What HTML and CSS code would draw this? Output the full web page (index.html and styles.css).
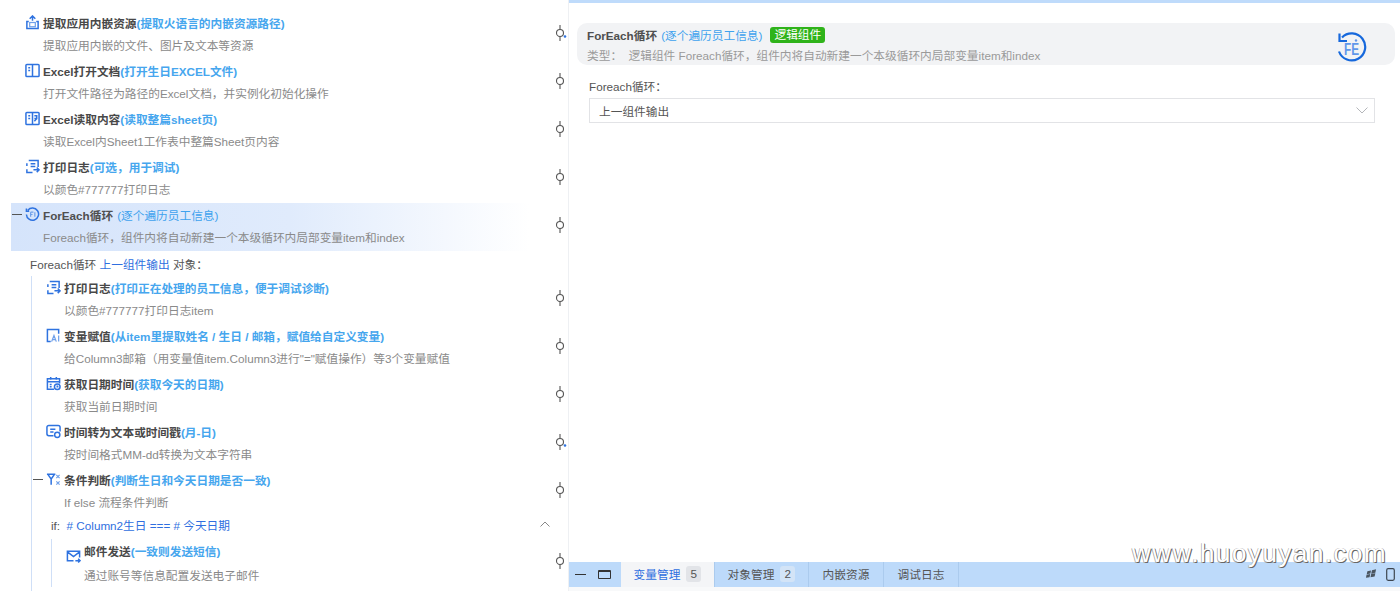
FILE: index.html
```html
<!DOCTYPE html>
<html lang="zh">
<head>
<meta charset="utf-8">
<title>ForEach循环</title>
<link rel="stylesheet" href="styles.css">
</head>
<body>
<div class="app">
  <section class="tree">
    <div class="node">
      <div class="title"><svg class="ico" viewBox="0 0 16 16"><path d="M5 4l3-3 3 3M8 1v5M4 7h-2v7.500h12V7h-2"/><rect class="soft" x="5" y="8" width="6" height="4.500"/></svg><b>提取应用内嵌资源</b><em>(提取火语言的内嵌资源路径)</em></div>
      <div class="desc">提取应用内嵌的文件、图片及文本等资源</div>
      <svg class="link" viewBox="0 0 12 18"><path d="M5 1v4.500M5 12.500V17"/><circle cx="5" cy="9" r="3.500"/><circle class="dot" cx="10" cy="12.500" r="1.300"/></svg>
    </div>
    <div class="node">
      <div class="title"><svg class="ico" viewBox="0 0 16 16"><rect x="1" y="1.500" width="14" height="13" rx="1"/><path d="M8 1.500v13M3.500 5h2M3.500 8h2"/></svg><b>Excel打开文档</b><em>(打开生日EXCEL文件)</em></div>
      <div class="desc">打开文件路径为路径的Excel文档，并实例化初始化操作</div>
      <svg class="link" viewBox="0 0 12 18"><path d="M5 1v4.500M5 12.500V17"/><circle cx="5" cy="9" r="3.500"/></svg>
    </div>
    <div class="node">
      <div class="title"><svg class="ico" viewBox="0 0 16 16"><rect x="1" y="1.500" width="14" height="13" rx="1"/><path d="M8 1.500v13M3.500 5h2M3.500 8h2M10 5h2.500v3H10M10 11l2.500-3"/></svg><b>Excel读取内容</b><em>(读取整篇sheet页)</em></div>
      <div class="desc">读取Excel内Sheet1工作表中整篇Sheet页内容</div>
      <svg class="link" viewBox="0 0 12 18"><path d="M5 1v4.500M5 12.500V17"/><circle cx="5" cy="9" r="3.500"/></svg>
    </div>
    <div class="node">
      <div class="title"><svg class="ico" viewBox="0 0 16 16"><path d="M4 1.500h10v7M2 7.500v-3M2 11v3.500h6M6 5h5M6 8h5M9 11.500h6M12.500 9l2.500 2.500-2.500 2.500"/></svg><b>打印日志</b><em>(可选，用于调试)</em></div>
      <div class="desc">以颜色#777777打印日志</div>
      <svg class="link" viewBox="0 0 12 18"><path d="M5 1v4.500M5 12.500V17"/><circle cx="5" cy="9" r="3.500"/></svg>
    </div>
    <div class="node node-active">
      <span class="toggle"></span>
      <div class="title"><svg class="ico" viewBox="0 0 16 16"><path d="M3 3.500A6.500 6.500 0 1 1 1.500 8M1.500 1.500v3h3"/><path class="soft" d="M6 5.500h3M6 5.500v5M6 8h2M10.500 5.500v5"/></svg><b class="thin">ForEach循环</b><em class="spaced">(逐个遍历员工信息)</em></div>
      <div class="desc">Foreach循环，组件内将自动新建一个本级循环内局部变量item和index</div>
      <svg class="link" viewBox="0 0 12 18"><path d="M5 1v4.500M5 12.500V17"/><circle cx="5" cy="9" r="3.500"/></svg>
    </div>
    <div class="loop-line">Foreach循环 <a>上一组件输出</a> 对象：</div>
    <div class="group group-outer">
      <div class="node">
        <div class="title"><svg class="ico" viewBox="0 0 16 16"><path d="M4 1.500h10v7M2 7.500v-3M2 11v3.500h6M6 5h5M6 8h5M9 11.500h6M12.500 9l2.500 2.500-2.500 2.500"/></svg><b>打印日志</b><em>(打印正在处理的员工信息，便于调试诊断)</em></div>
        <div class="desc">以颜色#777777打印日志item</div>
        <svg class="link" viewBox="0 0 12 18"><path d="M5 1v4.500M5 12.500V17"/><circle cx="5" cy="9" r="3.500"/></svg>
      </div>
      <div class="node">
        <div class="title"><svg class="ico" viewBox="0 0 16 16"><path d="M5 14.500H1.500v-13h12V6"/><path class="soft" d="M6 14.500l2.500-6.500 2.500 6.500M7 12.500h3M13.500 8v6.500"/></svg><b>变量赋值</b><em>(从item里提取姓名 / 生日 / 邮箱，赋值给自定义变量)</em></div>
        <div class="desc">给Column3邮箱（用变量值item.Column3进行"="赋值操作）等3个变量赋值</div>
        <svg class="link" viewBox="0 0 12 18"><path d="M5 1v4.500M5 12.500V17"/><circle cx="5" cy="9" r="3.500"/></svg>
      </div>
      <div class="node">
        <div class="title"><svg class="ico" viewBox="0 0 16 16"><path d="M14.500 8V3h-13v11h7M1.500 6h13M5 1v3M11 1v3M4 9h2M4 11.500h2"/><circle cx="12" cy="11.500" r="3"/><path d="M12 10v1.500h1.200"/></svg><b>获取日期时间</b><em>(获取今天的日期)</em></div>
        <div class="desc">获取当前日期时间</div>
        <svg class="link" viewBox="0 0 12 18"><path d="M5 1v4.500M5 12.500V17"/><circle cx="5" cy="9" r="3.500"/></svg>
      </div>
      <div class="node">
        <div class="title"><svg class="ico" viewBox="0 0 16 16"><path d="M8 12.500H3a2 2 0 0 1-2-2v-7a2 2 0 0 1 2-2h10a2 2 0 0 1 2 2V8M4.500 5.500H10M4.500 8.500H8"/><circle cx="12" cy="11.500" r="2.800"/></svg><b>时间转为文本或时间戳</b><em>(月-日)</em></div>
        <div class="desc">按时间格式MM-dd转换为文本字符串</div>
        <svg class="link" viewBox="0 0 12 18"><path d="M5 1v4.500M5 12.500V17"/><circle cx="5" cy="9" r="3.500"/><circle class="dot" cx="10" cy="12.500" r="1.300"/></svg>
      </div>
      <div class="node">
        <span class="toggle"></span>
        <div class="title"><svg class="ico" viewBox="0 0 16 16"><path d="M1 2.500h9M2 2.500l3.500 5v6M9 2.500l-3.500 5"/><path class="soft" d="M11 3l3.500 3.500M14.500 3L11 6.500M11 10l3.500 3.500M14.500 10L11 13.500"/></svg><b>条件判断</b><em>(判断生日和今天日期是否一致)</em></div>
        <div class="desc">If else 流程条件判断</div>
        <svg class="link" viewBox="0 0 12 18"><path d="M5 1v4.500M5 12.500V17"/><circle cx="5" cy="9" r="3.500"/></svg>
      </div>
      <div class="if-line">if:&nbsp; <a># Column2生日 === # 今天日期</a><svg class="caret" viewBox="0 0 10 6"><path d="M.5 5.500l4.500-4.500 4.500 4.500"/></svg></div>
      <div class="group group-inner">
        <div class="node node-mail">
          <div class="title"><svg class="ico" viewBox="0 0 16 16"><path d="M8 12.500H1.500v-10h13V9M1.500 3l6.500 5 6.500-5M10 12.500h5M13 10.500l2 2-2 2"/></svg><b>邮件发送</b><em>(一致则发送短信)</em></div>
          <div class="desc">通过账号等信息配置发送电子邮件</div>
          <svg class="link" viewBox="0 0 12 18"><path d="M5 1v4.500M5 12.500V17"/><circle cx="5" cy="9" r="3.500"/></svg>
        </div>
      </div>
    </div>
  </section>
  <main class="detail">
    <div class="topline"></div>
    <div class="content">
      <header class="card">
        <div class="card-text">
          <div class="card-title"><b class="thin">ForEach循环</b><em class="spaced">(逐个遍历员工信息)</em><span class="tag">逻辑组件</span></div>
          <div class="card-desc">类型：&nbsp; 逻辑组件 Foreach循环，组件内将自动新建一个本级循环内局部变量item和index</div>
        </div>
        <svg class="fe" viewBox="0 0 30 30"><path class="ring" d="M5 5.500A13.500 13.500 0 1 1 2 19.500"/><path class="ring" d="M2.500 1.500v7.500h7.500"/><text x="7" y="23" class="fe-text" textLength="15" lengthAdjust="spacingAndGlyphs">FE</text><circle class="fe-dot" cx="19" cy="8.500" r="1.200"/></svg>
      </header>
      <label class="field-label">Foreach循环：</label>
      <div class="select">上一组件输出<svg class="chev" viewBox="0 0 12 7"><path d="M.5.500L6 6 11.500.500"/></svg></div>
    </div>
    <nav class="bar">
      <span class="minus"></span>
      <span class="win"></span>
      <div class="tab tab-active">变量管理<span class="count">5</span></div>
      <div class="tab tab-count">对象管理<span class="count">2</span></div>
      <div class="tab tab-plain">内嵌资源</div>
      <div class="tab tab-plain">调试日志</div>
      <div class="bar-end">
        <svg class="os" viewBox="0 0 12 12"><path d="M1.500 2.500l4-1-.7 3.500-4 .8zM6.500 1.300l4.500-1-.8 3.800-4.500.8zM.6 6.200l4-.8-.7 3.500-4 .8zM5.700 5.300l4.500-.8-.8 3.800-4.500.8z"/></svg>
        <svg class="phone" viewBox="0 0 9 13"><rect x=".7" y=".7" width="7.600" height="11.600" rx="1.500"/></svg>
      </div>
    </nav>
    <div class="foot"></div>
  </main>
  <div class="watermark">www.huoyuyan.com</div>
</div>
</body>
</html>
```
FILE: styles.css
```css
* { box-sizing: border-box; }
html, body { margin: 0; height: 100%; }
body {
  font-family: "Liberation Sans", "Noto Sans CJK SC", sans-serif;
  font-size: 11.700px;
  color: #555;
  background: #fff;
  overflow: hidden;
}
.app { display: flex; height: 591px; position: relative; overflow: hidden; }

.tree {
  width: 569px;
  flex: none;
  padding: 11px 0 0 11px;
  border-right: 1px solid #eef0f3;
  overflow: hidden;
}
.node { position: relative; height: 48px; padding-left: 14px; }
.node-active { background: linear-gradient(90deg, #d5e4fb 0%, #e0ebfc 50%, #ffffff 93%); }
.title { display: flex; align-items: center; height: 22px; white-space: nowrap; }
.title b { font-weight: 700; color: #484848; }
.title b.thin, .card-title b.thin { font-weight: 700; color: #4f4f4f; }
em { font-style: normal; font-weight: 700; color: #46a6ee; }
em.spaced { margin-left: 4px; font-weight: 400; color: #3ea2ee; }
.desc { height: 22px; margin-top: 2px; line-height: 22px; padding-left: 18px; color: #8a8a8a; white-space: nowrap; }
.ico {
  width: 15px; height: 15px; margin: 0 3.500px 0 -.5px; flex: none;
  fill: none; stroke: #2f73e0; stroke-width: 1.600;
}
.ico .soft { stroke: #6fa0ea; stroke-width: 1.300; }
.toggle { position: absolute; left: 1px; top: 10.500px; width: 10px; height: 1.300px; background: #555; }
.link {
  position: absolute; right: 1px; top: 13px; width: 12px; height: 18px;
  fill: none; stroke: #555; stroke-width: 1.100;
}
.link .dot { fill: #2f73e0; stroke: none; }

.loop-line { height: 25px; padding-top: 1px; line-height: 25px; padding-left: 19px; color: #555; white-space: nowrap; }
a { color: #2f6fe0; }
.group { margin-left: 20px; border-left: 1px solid #cfdff7; }
.group-outer { padding-bottom: 6px; }
.group-inner { margin-left: 19px; height: 48px; }
.if-line { position: relative; height: 23px; line-height: 19px; padding-left: 19px; color: #555; white-space: nowrap; }
.caret {
  position: absolute; left: 508px; top: 5px; width: 10px; height: 6px;
  fill: none; stroke: #888; stroke-width: 1;
}
.node-mail .ico { position: relative; top: 6px; }
.node-mail .desc { margin-top: 4px; }

.detail { flex: 1; display: flex; flex-direction: column; min-width: 0; }
.topline { height: 3px; background: #bfdbfb; flex: none; }
.content { flex: 1; padding: 20px 5px 0 8px; }
.card {
  display: flex; justify-content: space-between; align-items: center;
  height: 42px; padding: 0 28px 0 10px;
  background: #f2f3f5; border-radius: 10px;
}
.card-title { display: flex; align-items: center; height: 21px; white-space: nowrap; }
.tag {
  margin-left: 8px; padding: 0 4px; height: 16px; line-height: 16px;
  background: #2fb31a; color: #fff; border-radius: 3px;
}
.card-desc { height: 19px; padding-top: 1px; line-height: 19px; color: #9a9a9a; white-space: nowrap; }
.fe { width: 30px; height: 30px; margin-top: 5px; fill: none; }
.ring { stroke: #1668dc; stroke-width: 2.200; }
.fe-text { fill: #5f97ea; stroke: none; font-size: 16px; font-weight: 700; font-family: "Liberation Sans", sans-serif; }
.fe-dot { fill: #5f97ea; }
.field-label { display: block; margin: 12px 0 0 12px; height: 20px; line-height: 20px; color: #555; }
.select {
  position: relative; display: flex; align-items: center; justify-content: space-between;
  margin: 1px 20px 0 12px; height: 25px; padding: 0 6px 0 9px;
  border: 1px solid #e2e3e6; color: #555;
}
.chev { width: 12px; height: 7px; fill: none; stroke: #b4b6ba; stroke-width: 1; }

.bar {
  flex: none; display: flex; align-items: stretch;
  height: 25px; background: #bddafa; color: #555;
}
.minus { align-self: center; width: 11px; height: 1.500px; margin-left: 6px; background: #333; }
.win {
  align-self: center; width: 13px; height: 9px; margin: 0 10px 0 12px;
  border: 1.300px solid #333; border-top-width: 2.500px; border-radius: 1px;
}
.tab { display: flex; align-items: center; justify-content: center; padding-bottom: 2px; border-right: 1px solid #abcbee; white-space: nowrap; }
.tab-active { width: 94px; background: #f4f5f7; color: #2f6fe0; }
.tab-count { width: 94px; }
.tab-plain { width: 75px; }
.count {
  margin-left: 6px; width: 15px; height: 16px; line-height: 16px; text-align: center;
  background: #e2e4e8; border-radius: 3px; color: #555;
}
.tab-count .count { background: #d3e4f7; }
.bar-end { margin-left: auto; display: flex; align-items: center; gap: 9px; padding-right: 5px; }
.os { width: 11px; height: 11px; fill: #4a5560; }
.phone { width: 9px; height: 13px; fill: none; stroke: #3d4650; stroke-width: 1.200; }
.foot { flex: none; height: 4px; background: #f8f9fa; }

.watermark {
  position: absolute; left: 1132px; top: 537px;
  font-family: "Liberation Sans", sans-serif; font-size: 26px; line-height: 32px;
  letter-spacing: 1.500px; white-space: nowrap;
  color: #fff;
  text-shadow: 1px 1px 0 #666, -.5px -.5px 0 #aaa, .5px -.5px 0 #aaa, -.5px .5px 0 #aaa;
}
```
